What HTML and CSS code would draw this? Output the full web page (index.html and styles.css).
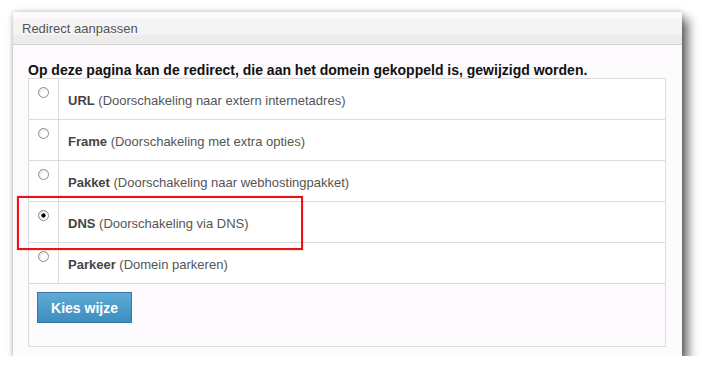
FILE: index.html
```html
<!DOCTYPE html>
<html lang="nl">
<head>
  <meta charset="UTF-8">
  <title>Redirect aanpassen</title>
  <link rel="stylesheet" href="styles.css">
</head>
<body>

  <div class="panel">
    <div class="panel-head">Redirect aanpassen</div>

    <div class="panel-body">
      <h3 class="intro">Op deze pagina kan de redirect, die aan het domein gekoppeld is, gewijzigd worden.</h3>

      <div class="options">
        <label class="option">
          <span class="pick"><input type="radio" name="wijze" value="url"></span>
          <span class="desc"><b>URL</b> (Doorschakeling naar extern internetadres)</span>
        </label>
        <label class="option">
          <span class="pick"><input type="radio" name="wijze" value="frame"></span>
          <span class="desc"><b>Frame</b> (Doorschakeling met extra opties)</span>
        </label>
        <label class="option">
          <span class="pick"><input type="radio" name="wijze" value="pakket"></span>
          <span class="desc"><b>Pakket</b> (Doorschakeling naar webhostingpakket)</span>
        </label>
        <label class="option">
          <span class="pick"><input type="radio" name="wijze" value="dns" checked></span>
          <span class="desc"><b>DNS</b> (Doorschakeling via DNS)</span>
        </label>
        <label class="option">
          <span class="pick"><input type="radio" name="wijze" value="parkeer"></span>
          <span class="desc"><b>Parkeer</b> (Domein parkeren)</span>
        </label>
        <div class="actions">
          <button class="btn">Kies wijze</button>
        </div>
      </div>
    </div>

    <div class="marker"></div>
  </div>

</body>
</html>
```

FILE: styles.css
```css
body { margin: 0; background: #fff; font-family: "Liberation Sans", Arial, sans-serif; font-size: 13px; color: #444; }

.panel {
  position: relative;
  width: 669px;
  height: 344px;
  margin: 12px 0 0 13px;
  background: #fdfafd;
  box-shadow: 6px 7px 10px rgba(0,0,0,0.6), 0 0 5px rgba(0,0,0,0.25);
}
.panel-head {
  height: 32px;
  line-height: 34px;
  padding-left: 9px;
  border-bottom: 1px solid #d2d2d2;
  background: linear-gradient(#fdfafd 0, #fdfafd 18%, #f5f5f5 25%, #f3f3f3 70%, #ececec 72%, #ececec 100%);
  color: #555;
}
.panel-body { padding: 0 16px 0 15px; }

.intro { margin: 0; padding-top: 17px; height: 16px; line-height: 16px; font-size: 14px; color: #111; }

.options { border: 1px solid #dcdcdc; background: #fff; }
.option { display: flex; height: 40px; border-bottom: 1px solid #dcdcdc; cursor: pointer; }
.pick { width: 29px; border-right: 1px solid #dcdcdc; }
.desc { padding: 14px 0 0 9px; color: #555; }
.desc b { color: #444; }

.pick input {
  appearance: none;
  -webkit-appearance: none;
  display: block;
  width: 11px;
  height: 11px;
  margin: 8px 0 0 9px;
  border: 1px solid #8c8c8c;
  border-radius: 50%;
  background: radial-gradient(circle at 65% 65%, #fff 0, #fff 35%, #d8d8d8 100%);
}
.pick input:checked {
  background: radial-gradient(circle, #000 0, #000 1.8px, transparent 2.4px), radial-gradient(circle at 65% 65%, #fff 0, #fff 35%, #d8d8d8 100%);
}

.actions { height: 62px; padding: 8px; background: #fdfafd; box-sizing: border-box; }
.btn {
  width: 95px;
  height: 31px;
  border: 1px solid #3677a5;
  background: linear-gradient(#5eabd6, #3e8dc0);
  color: #fff;
  font-family: "Liberation Sans", Arial, sans-serif;
  font-size: 14px;
  font-weight: bold;
  padding: 0;
  cursor: pointer;
}

/* annotation box around the DNS row */
.marker {
  position: absolute;
  left: 4px;
  top: 184px;
  width: 282px;
  height: 50px;
  border: 2px solid #ee1111;
  box-shadow: 0 0 1px #f66;
  pointer-events: none;
}
```
